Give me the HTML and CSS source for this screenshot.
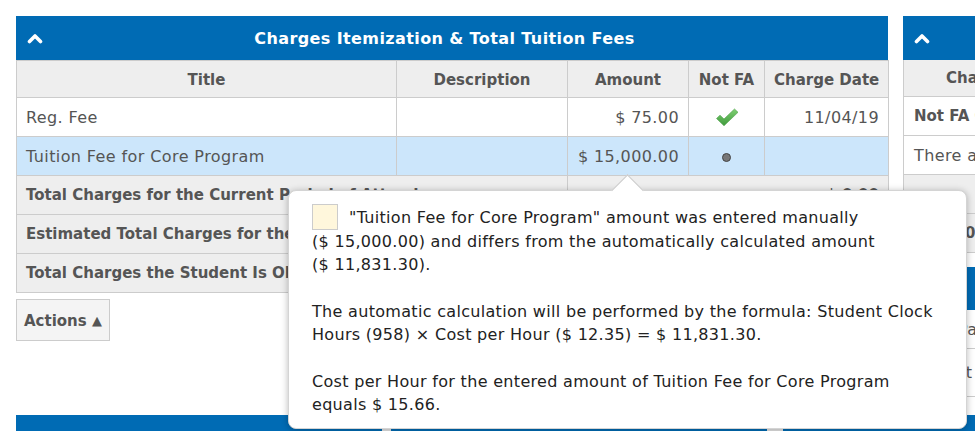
FILE: index.html
```html
<!DOCTYPE html>
<html>
<head>
<meta charset="utf-8">
<link rel="stylesheet" href="styles.css">
</head>
<body>
<div class="page">
  <div class="top">
    <div class="main-col">
      <div class="panel">
        <div class="panel-head">
          <svg class="chev" width="16" height="12" viewBox="0 0 16 12"><path d="M2.5 9.5 L8 4 L13.5 9.5" fill="none" stroke="#fff" stroke-width="3.6" stroke-linejoin="round" stroke-linecap="round"/></svg>
          <span class="head-title">Charges Itemization &amp; Total Tuition Fees</span>
        </div>
        <table class="grid">
          <colgroup>
            <col style="width:380px"><col style="width:171px"><col style="width:121px"><col style="width:76px"><col style="width:124px">
          </colgroup>
          <thead>
            <tr><th>Title</th><th>Description</th><th>Amount</th><th>Not FA</th><th>Charge Date</th></tr>
          </thead>
          <tbody>
            <tr>
              <td>Reg. Fee</td><td></td><td class="r">$ 75.00</td>
              <td class="c"><svg width="24" height="19" viewBox="0 0 24 19"><defs><linearGradient id="g" x1="0" y1="0" x2="0" y2="1"><stop offset="0" stop-color="#7fcf72"/><stop offset="1" stop-color="#3f9a3c"/></linearGradient></defs><path d="M1.5 10.5 L5 7.2 L9 11 L19.5 1 L23 4.3 L9 17.8 Z" fill="url(#g)" stroke="#4a9e46" stroke-width="0.6" stroke-linejoin="round"/></svg></td>
              <td class="r">11/04/19</td>
            </tr>
            <tr class="sel">
              <td>Tuition Fee for Core Program</td><td></td><td class="r">$ 15,000.00</td>
              <td class="c"><span class="dot"></span></td><td></td>
            </tr>
            <tr class="tot"><td colspan="2">Total Charges for the Current Period of Attendance</td><td colspan="3" class="r">$ 0.00</td></tr>
            <tr class="tot"><td colspan="2">Estimated Total Charges for the Entire Program</td><td colspan="3" class="r">$ 15,075.00</td></tr>
            <tr class="tot"><td colspan="2">Total Charges the Student Is Obligated to Pay</td><td colspan="3" class="r">$ 15,075.00</td></tr>
          </tbody>
        </table>
      </div>
      <div class="actions-row">
        <button class="actions">Actions <span class="tri">&#9650;</span></button>
      </div>
    </div>
    <div class="side-col">
      <div class="panel">
        <div class="panel-head">
          <svg class="chev" width="16" height="12" viewBox="0 0 16 12"><path d="M2.5 9.5 L8 4 L13.5 9.5" fill="none" stroke="#fff" stroke-width="3.6" stroke-linejoin="round" stroke-linecap="round"/></svg>
          <span class="head-title">Charges Not Included</span>
        </div>
        <div class="srow shead">Charge Title</div>
        <div class="srow ssub">Not FA Charges</div>
        <div class="srow">There are no charges</div>
        <div class="srow sgrey"></div>
        <div class="srow sgrey sbold">0.00</div>
      </div>
      <div class="panel second">
        <div class="panel-head short"></div>
        <div class="srow pad-a">Payments</div>
        <div class="srow tall pad-t">Tot</div>
      </div>
    </div>
  </div>
  <div class="bottom">
    <div class="bpanel w1"><span>Payment Schedule</span></div>
    <div class="bgap"></div>
    <div class="bpanel w2"><span>Financial Aid</span></div>
    <div class="bgap wide"></div>
    <div class="bpanel w3"><span>Refunds</span></div>
  </div>

  <div class="popup">
    <div class="arrow"></div>
    <p><span class="swatch"></span>"Tuition Fee for Core Program" amount was entered manually ($&nbsp;15,000.00) and differs from the automatically calculated amount ($&nbsp;11,831.30).</p>
    <p>The automatic calculation will be performed by the formula: Student Clock Hours (958) &times; Cost per Hour ($&nbsp;12.35) = $&nbsp;11,831.30.</p>
    <p>Cost per Hour for the entered amount of Tuition Fee for Core Program equals $&nbsp;15.66.</p>
  </div>
</div>
</body>
</html>
```
FILE: styles.css
```css
html, body {
  margin: 0;
  padding: 0;
  overflow: hidden;
  background: #fff;
}
body {
  font-family: "DejaVu Sans", Verdana, sans-serif;
  font-size: 16px;
  letter-spacing: 0.4px;
  color: #555;
}
.page {
  position: relative;
  padding: 16px 0 0 16px;
  width: 975px;
  height: 431px;
  box-sizing: border-box;
  overflow: hidden;
}
.top {
  display: flex;
  gap: 15px;
  align-items: flex-start;
}
.main-col {
  width: 872px;
  flex: none;
}
.panel-head {
  height: 44px;
  background: #006bb4;
  color: #fff;
  display: flex;
  align-items: center;
  padding-left: 11px;
  position: relative;
}
.chev {
  display: block;
}
.head-title {
  position: absolute;
  left: 0;
  right: 15px;
  text-align: center;
  font-weight: bold;
  white-space: nowrap;
}
.grid {
  width: 872px;
  table-layout: fixed;
  border-collapse: collapse;
}
.grid th, .grid td {
  border: 1px solid #ccc;
  padding: 0 9px;
  white-space: nowrap;
  overflow: hidden;
}
.grid th {
  height: 35px;
  padding-top: 1px;
  background: #eee;
  font-weight: bold;
  font-size: 15px;
  letter-spacing: 0;
  text-align: center;
  color: #555;
}
.grid td {
  height: 38px;
  background: #fff;
}
.grid .r { text-align: right; }
.grid .c { text-align: center; }
.grid td svg { display: inline-block; vertical-align: middle; }
.grid tr.sel td { background: #cce6fb; }
.grid tr.tot td {
  background: #eee;
  font-weight: bold;
  font-size: 15px;
  letter-spacing: 0;
}
.dot {
  display: inline-block;
  width: 7px;
  height: 7px;
  border-radius: 50%;
  background: #777;
  border: 1px solid #444;
  vertical-align: middle;
}
.actions-row {
  padding-top: 6px;
}
.actions {
  font-family: inherit;
  font-size: 15px;
  letter-spacing: 0;
  font-weight: bold;
  color: #555;
  background: #f4f4f4;
  border: 1px solid #ccc;
  height: 42px;
  padding: 2px 7px 0 7px;
  margin: 0;
}
.tri {
  font-size: 13px;
  vertical-align: 1px;
}
.side-col {
  width: 400px;
  flex: none;
}
.srow {
  height: 38px;
  border: 1px solid #ccc;
  border-top: none;
  display: flex;
  align-items: center;
  padding: 0 10px;
  background: #fff;
  white-space: nowrap;
}
.shead {
  height: 36px;
  background: #eee;
  font-weight: bold;
  font-size: 15px;
  letter-spacing: 0;
  padding-left: 42px;
}
.ssub {
  font-weight: bold;
  font-size: 15px;
  letter-spacing: 0;
}
.sgrey { background: #eee; }
.sbold { font-weight: bold; font-size: 15px; letter-spacing: 0; padding-left: 61px; }
.pad-a { padding-left: 54px; }
.pad-t { padding-left: 44px; }
.second { margin-top: 14px; }
.panel-head.short { height: 43px; }
.srow.tall { height: 47px; }
.bottom {
  position: absolute;
  left: 16px;
  top: 415px;
  display: flex;
}
.bpanel {
  height: 44px;
  background: #006bb4;
  color: #fff;
  font-weight: bold;
  display: flex;
  justify-content: center;
  padding-top: 14px;
  box-sizing: border-box;
  white-space: nowrap;
}
.bgap {
  width: 9px;
  background: #e4e4e4;
}
.bgap.wide { width: 16px; }
.w1 { width: 366px; }
.w2 { width: 376px; }
.w3 { width: 300px; }
.popup {
  position: absolute;
  left: 288px;
  top: 190px;
  width: 679px;
  height: 239px;
  box-sizing: border-box;
  background: #fff;
  border: 1px solid #d4d4d4;
  border-radius: 8px;
  box-shadow: 0 1px 7px rgba(0,0,0,0.28);
  padding: 13px 24px 0 23px;
  color: #222;
  font-size: 16px;
  letter-spacing: 0.31px;
  line-height: 23.3px;
}
.popup p {
  margin: 0 0 23.3px 0;
}
.arrow {
  position: absolute;
  left: 327px;
  top: -12px;
  width: 22px;
  height: 22px;
  background: #fff;
  border-top: 1px solid #c8c8c8;
  border-left: 1px solid #c8c8c8;
  transform: rotate(45deg);
}
.swatch {
  display: inline-block;
  width: 24px;
  height: 24px;
  background: #fff7dc;
  border: 1px solid #ccc;
  vertical-align: -7px;
  margin-right: 11px;
}
```
